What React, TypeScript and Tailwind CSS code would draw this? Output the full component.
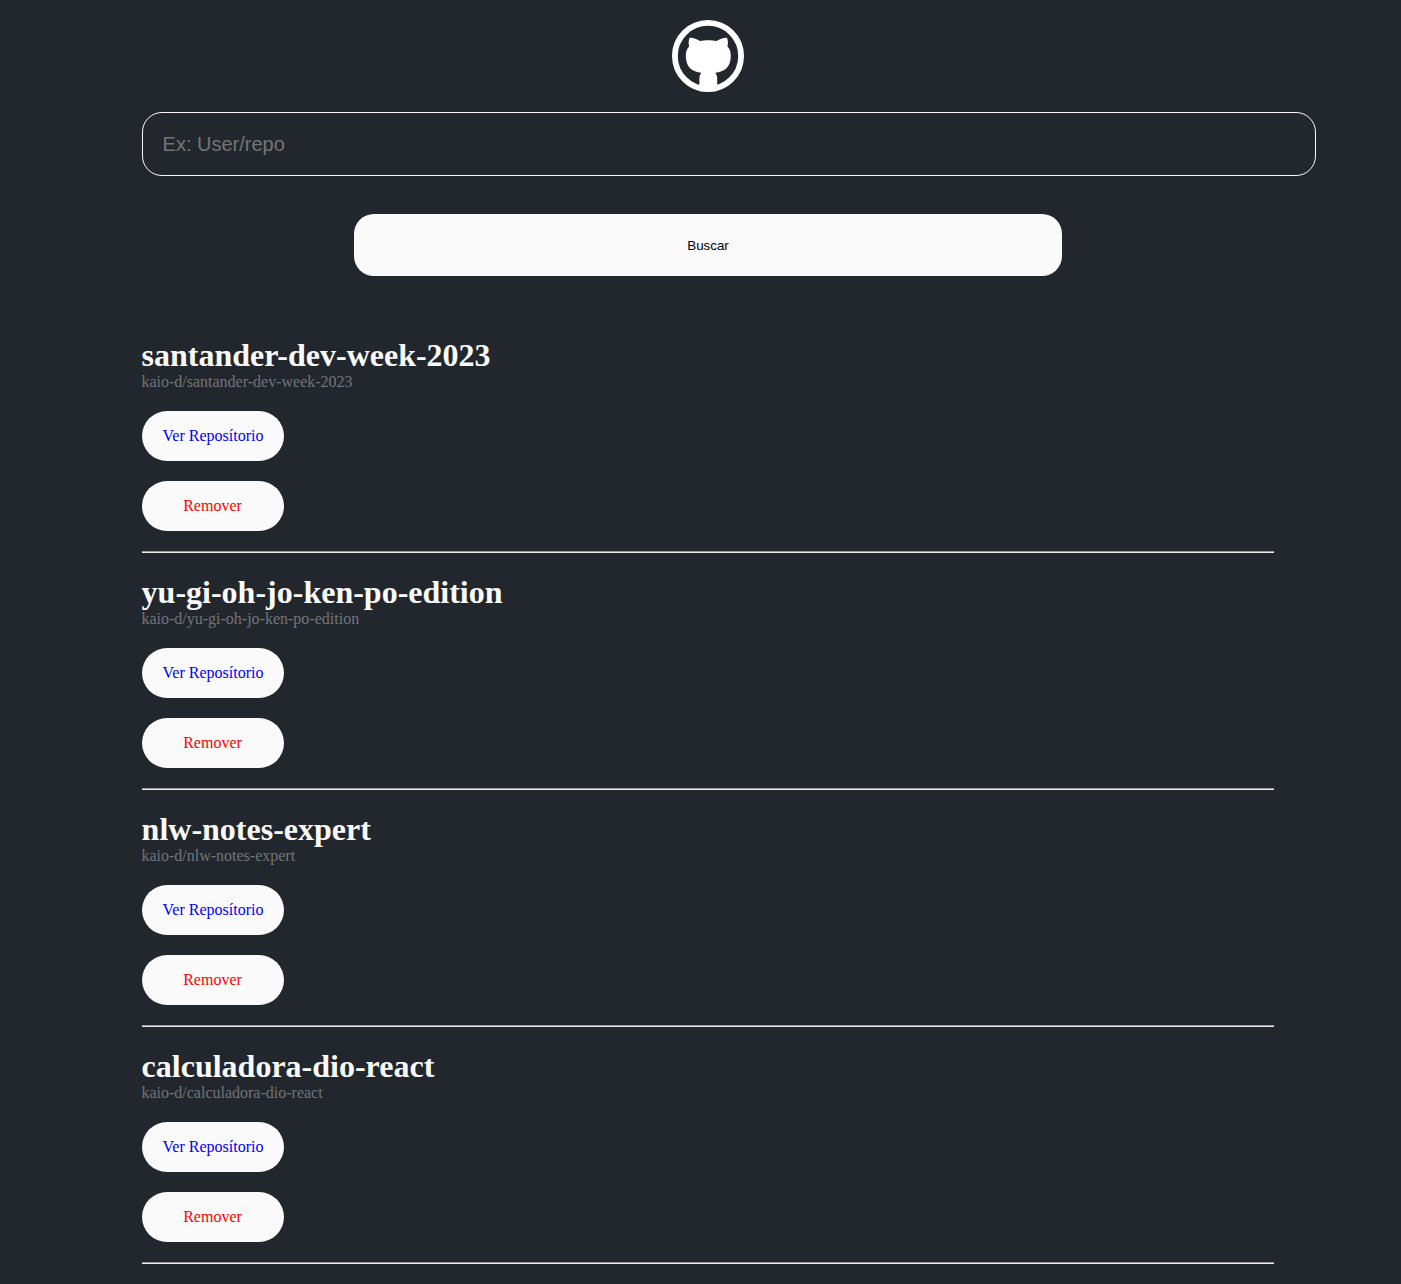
const repos = ['santander-dev-week-2023', 'yu-gi-oh-jo-ken-po-edition', 'nlw-notes-expert', 'calculadora-dio-react'];

function GithubMark() {
  return (
    <svg className="h-[72px] w-[72px]" viewBox="0 0 72 72" fill="none">
      <circle cx="36" cy="36" r="33.1" stroke="#fff" strokeWidth="5.8" />
      <path
        fill="#fff"
        d="M17.6 17.8C20.500 17.300 24.500 18.800 28 21C30.500 20.400 33.200 20.200 36.300 20.200C39.400 20.200 42.100 20.400 44.600 21C48.100 18.800 52 17.300 55 17.800C56.100 20.500 56.300 23.500 55.400 26.300C57.600 28.700 58.800 31.800 58.800 35.500C58.800 47.500 52.500 51.700 43.200 52.800C44.500 54.200 45.200 56.200 45.200 58.800V70Q36 73 27.400 70V58.800C27.400 56.200 28.100 54.200 29.400 52.800C20.100 51.700 13.800 47.500 13.800 35.500C13.800 31.800 15 28.700 17.200 26.300C16.300 23.500 16.500 20.500 17.600 17.800Z"
      />
    </svg>
  );
}

function Repo({ name }: { name: string }) {
  return (
    <article className="mb-5 pt-0.5 font-['Liberation_Serif',serif] text-base">
      <h3 className="-ml-[0.4px] h-[35px] text-[32px] leading-[35px] font-bold text-[#fafafa]">{name}</h3>
      <p className="mb-5 -ml-[0.6px] h-[18px] leading-[18px] text-[#fafafa60]">kaio-d/{name}</p>
      <a className="flex h-[50px] w-[142px] items-center justify-center rounded-[25px] bg-[#fafafa] text-[#0000ff]">Ver Reposítorio</a>
      <a className="mt-5 flex h-[50px] w-[142px] items-center justify-center rounded-[25px] bg-[#fafafa] pr-px text-[#ff0000]">Remover</a>
      <hr className="mt-5 h-[2px] w-[1132px] border-y border-t-[#9a9a9a] border-b-[#eeeeee]" />
    </article>
  );
}

export default function App() {
  return (
    <main className="h-[1284px] overflow-hidden bg-[#22272e] pl-[142px] font-['Liberation_Sans',sans-serif]">
      <div className="flex w-[1132px] flex-col items-center pt-5">
        <GithubMark />
        <input placeholder="Ex: User/repo" className="mt-5 h-16 w-[1174px] shrink-0 self-start rounded-[20px] border border-[#fafafa] pr-5 pl-[19.6px] text-xl text-white outline-none placeholder:text-[#757575]" />
        <button className="mt-[38px] mb-[60px] h-[62px] w-[708px] rounded-[20px] bg-[#fafafa] pt-0.5 text-[13.333px] text-black">Buscar</button>
      </div>
      {repos.map((name) => <Repo key={name} name={name} />)}
    </main>
  );
}
